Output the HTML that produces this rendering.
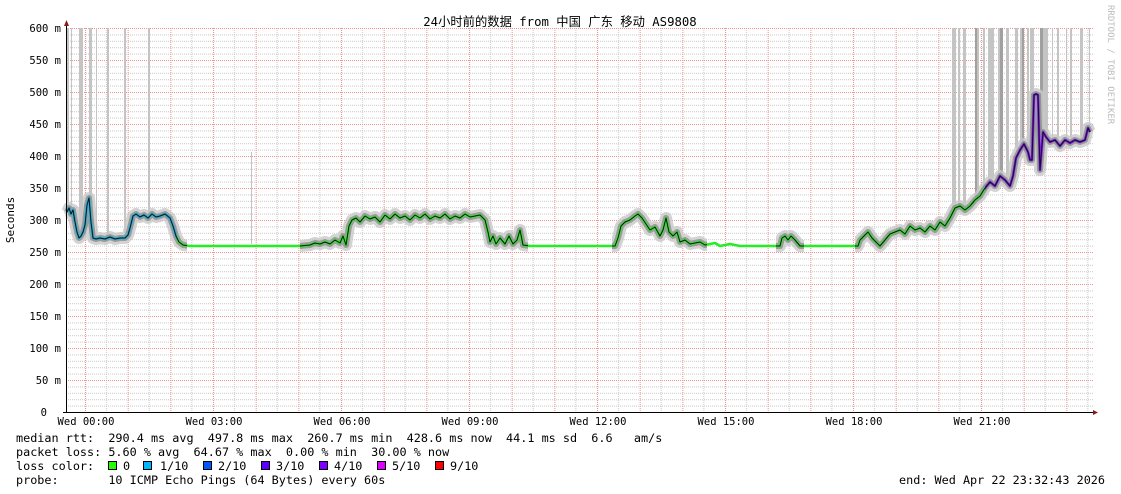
<!DOCTYPE html>
<html><head><meta charset="utf-8"><style>
html,body{margin:0;padding:0;background:#fff;}
svg{display:block;}
text{font-family:"DejaVu Sans Mono","Liberation Mono",monospace;fill:#000;}
</style></head><body>
<svg width="1121" height="494" viewBox="0 0 1121 494" xmlns="http://www.w3.org/2000/svg">
<defs>
<pattern id="hmin" x="0" y="28" width="2" height="6.4" patternUnits="userSpaceOnUse"><rect x="0" y="0" width="1" height="1" fill="#c8c8c8"/></pattern>
<pattern id="vgrid" x="85" y="0" width="42.667" height="2" patternUnits="userSpaceOnUse"><rect x="21" y="0" width="1" height="1" fill="#c8c8c8"/><rect x="0" y="0" width="1" height="1" fill="#f29090"/></pattern>
<pattern id="hmaj" x="0" y="28" width="2" height="32" patternUnits="userSpaceOnUse"><rect x="0" y="0" width="1" height="1" fill="#f29090"/></pattern>
<clipPath id="act"><rect x="60" y="0" width="127" height="494"/><rect x="300" y="0" width="228" height="494"/><rect x="612" y="0" width="95" height="494"/><rect x="776" y="0" width="28" height="494"/><rect x="855" y="0" width="240" height="494"/></clipPath>
<clipPath id="cb"><rect x="67" y="0" width="110" height="494"/></clipPath>
<clipPath id="cp"><rect x="985" y="0" width="110" height="494"/></clipPath>
</defs>
<rect width="1121" height="494" fill="#fff"/>
<text x="560" y="26" text-anchor="middle" style="font-family:'DejaVu Sans Mono','Noto Sans CJK SC',monospace;font-size:12.3px">24小时前的数据 from 中国 广东 移动 AS9808</text>
<rect x="67" y="28" width="1026" height="384" fill="url(#hmin)"/>
<rect x="67" y="28" width="1026" height="384" fill="url(#vgrid)"/>
<rect x="67" y="28" width="1026" height="384" fill="url(#hmaj)"/>
<!-- spikes -->
<g fill="#c4c4c4">
<rect x="67" y="28" width="2" height="185"/><rect x="71" y="28" width="1" height="185"/><rect x="79" y="28" width="4" height="205"/><rect x="89" y="28" width="3" height="170"/><rect x="96" y="28" width="1" height="210"/><rect x="107" y="28" width="2" height="210"/><rect x="124" y="28" width="2" height="205"/><rect x="148" y="28" width="2" height="185"/><rect x="251" y="152" width="1" height="92"/>
<rect x="952" y="28" width="4" height="180"/><rect x="958" y="28" width="2" height="180"/><rect x="963" y="28" width="3" height="180"/><rect x="975" y="28" width="4" height="170"/><rect x="983" y="28" width="2" height="160"/><rect x="988" y="28" width="5" height="155"/><rect x="993" y="28" width="1" height="150"/><rect x="998" y="28" width="4" height="150"/><rect x="1006" y="28" width="3" height="150"/><rect x="1015" y="28" width="3" height="120"/><rect x="1020" y="28" width="4" height="120"/><rect x="1027" y="28" width="2" height="120"/><rect x="1030" y="28" width="4" height="120"/><rect x="1043" y="28" width="5" height="110"/><rect x="1052" y="28" width="1" height="110"/><rect x="1057" y="28" width="2" height="110"/><rect x="1066" y="28" width="1" height="110"/><rect x="1070" y="28" width="2" height="110"/><rect x="1080" y="28" width="3" height="110"/><rect x="1089" y="28" width="1" height="110"/>
</g>
<g fill="#a0a0a0"><rect x="975" y="28" width="2" height="170"/><rect x="1000" y="28" width="3" height="150"/><rect x="1040" y="28" width="3" height="110"/><rect x="1022" y="28" width="2" height="120"/></g>
<polyline id="m" fill="none" stroke-linejoin="round" points="67,212 69,208 71,214 73,210 75,222 77,232 79,238 81,236 83,232 85,225 87,205 89,198 91,222 93,238 96,239 100,238 105,239 110,237 115,239 120,238 125,238 128,235 130,228 133,216 136,214 140,217 144,215 148,218 152,214 156,217 160,216 165,214 170,218 173,226 176,236 179,242 183,245 190,246 300,246 310,245 315,243 320,244 325,242 330,244 335,240 340,243 343,236 346,245 349,226 352,220 356,218 360,222 365,216 370,219 375,217 380,222 385,215 390,219 395,214 400,218 405,216 410,220 415,215 420,218 425,214 430,219 435,216 440,218 445,214 450,219 455,216 460,218 465,214 470,217 475,216 480,215 485,220 488,232 490,242 493,236 496,244 500,238 505,244 509,236 513,244 517,240 520,230 523,245 530,246 615,246 618,238 621,226 625,222 630,220 635,216 638,214 642,218 646,224 650,230 655,227 660,236 663,230 666,218 669,232 673,236 677,232 680,242 685,240 690,244 700,242 705,245 715,243 720,246 730,244 740,246 780,246 782,238 785,236 788,240 791,236 795,240 800,246 858,246 860,240 864,236 868,232 872,238 876,242 880,246 885,240 890,234 895,232 900,230 905,234 910,226 915,230 920,228 925,232 930,226 935,230 940,222 945,226 950,218 955,208 960,206 965,210 970,206 975,200 980,196 985,188 990,182 995,186 1000,176 1005,180 1010,186 1013,176 1016,158 1020,150 1024,144 1028,152 1030,160 1032,160 1034,95 1036,94 1038,95 1040,170 1043,132 1046,137 1050,142 1055,140 1060,146 1065,140 1070,143 1075,140 1080,142 1085,140 1088,128 1090,132"/>
<g clip-path="url(#act)">
<use href="#m" stroke="#c8c8c8" stroke-width="12" opacity="0.8"/>
<use href="#m" stroke="#777" stroke-width="6" opacity="0.6"/>
</g>
<use href="#m" stroke="#22ee22" stroke-width="2.5"/>
<use href="#m" stroke="#1aa8ee" stroke-width="2.5" clip-path="url(#cb)"/>
<use href="#m" stroke="#8a10ff" stroke-width="2.5" clip-path="url(#cp)"/>
<g clip-path="url(#act)"><use href="#m" stroke="#111" stroke-width="1"/></g>
<!-- axes -->
<line x1="66.5" y1="24" x2="66.5" y2="413" stroke="#000"/>
<line x1="63" y1="412.5" x2="1094" y2="412.5" stroke="#000"/>
<polygon points="64,26 69,26 66.5,20" fill="#8b1a1a"/>
<polygon points="1093,410 1093,415 1098,412.5" fill="#8b1a1a"/>
<g font-size="10.5" text-anchor="end">
<text x="61" y="32">600 m</text><text x="61" y="64">550 m</text><text x="61" y="96">500 m</text><text x="61" y="128">450 m</text><text x="61" y="160">400 m</text><text x="61" y="192">350 m</text><text x="61" y="224">300 m</text><text x="61" y="256">250 m</text><text x="61" y="288">200 m</text><text x="61" y="320">150 m</text><text x="61" y="352">100 m</text><text x="61" y="384">50 m</text><text x="47" y="416">0</text>
</g>
<g font-size="10.5" text-anchor="middle">
<text x="86" y="425">Wed 00:00</text><text x="214" y="425">Wed 03:00</text><text x="342" y="425">Wed 06:00</text><text x="470" y="425">Wed 09:00</text><text x="598" y="425">Wed 12:00</text><text x="726" y="425">Wed 15:00</text><text x="854" y="425">Wed 18:00</text><text x="982" y="425">Wed 21:00</text>
</g>
<text transform="translate(14,220) rotate(-90)" font-size="11" text-anchor="middle">Seconds</text>
<text transform="translate(1108,5) rotate(90)" font-size="9" style="fill:#bbb">RRDTOOL / TOBI OETIKER</text>
<g font-size="11.8">
<text x="16" y="442" xml:space="preserve">median rtt:  290.4 ms avg  497.8 ms max  260.7 ms min  428.6 ms now  44.1 ms sd  6.6   am/s</text>
<text x="16" y="456" xml:space="preserve">packet loss: 5.60 % avg  64.67 % max  0.00 % min  30.00 % now</text>
<text x="16" y="470">loss color:</text>
<text x="123" y="470">0</text><text x="160" y="470">1/10</text><text x="218" y="470">2/10</text><text x="276" y="470">3/10</text><text x="334" y="470">4/10</text><text x="392" y="470">5/10</text><text x="450" y="470">9/10</text>
<text x="16" y="484" xml:space="preserve">probe:       10 ICMP Echo Pings (64 Bytes) every 60s</text>
<text x="1105" y="484" text-anchor="end">end: Wed Apr 22 23:32:43 2026</text>
</g>
<g stroke="#000" stroke-width="1">
<rect x="108.5" y="461.5" width="8" height="8" fill="#26ff00"/>
<rect x="143.5" y="461.5" width="8" height="8" fill="#00b8ff"/>
<rect x="203.5" y="461.5" width="8" height="8" fill="#0059ff"/>
<rect x="261.5" y="461.5" width="8" height="8" fill="#5e00ff"/>
<rect x="319.5" y="461.5" width="8" height="8" fill="#7e00ff"/>
<rect x="377.5" y="461.5" width="8" height="8" fill="#dd00ff"/>
<rect x="435.5" y="461.5" width="8" height="8" fill="#ff0000"/>
</g>
</svg>
</body></html>
